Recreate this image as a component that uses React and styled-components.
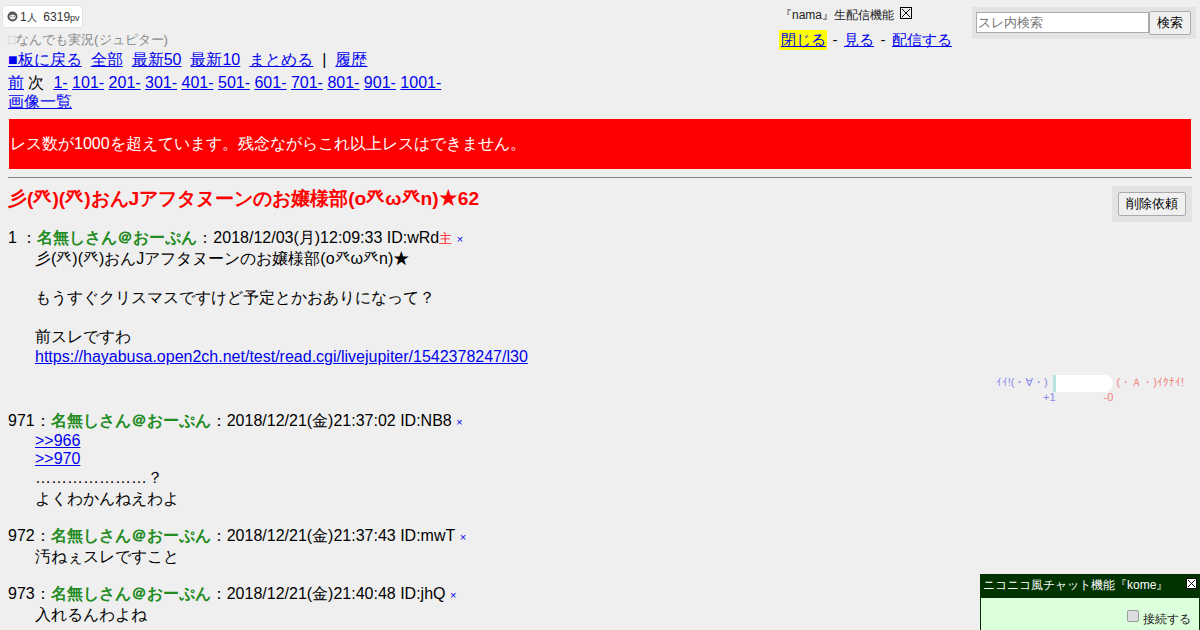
import styled, { createGlobalStyle } from "styled-components";

const FONT = `"Liberation Sans", sans-serif`;

const GlobalStyle = createGlobalStyle`
  html, body {
    margin: 0;
    height: 630px;
    overflow: hidden;
    background: #efefef;
    color: #000;
    font-family: ${FONT};
    font-size: 16px;
  }
  a { color: #0000ee; }
`;

const Page = styled.div`
  position: relative;
  height: 630px;
  padding: 5px 8px 0;
  box-sizing: border-box;
  overflow: hidden;
`;

const Header = styled.header`
  display: flex;
  justify-content: space-between;
  align-items: flex-start;
  height: 110px;
`;

const Left = styled.div`
  display: flex;
  flex-direction: column;
  align-items: flex-start;
  margin-left: -6px;
`;

const Counter = styled.div`
  display: flex;
  align-items: baseline;
  height: 23px;
  box-sizing: border-box;
  padding: 4px 2px 0 4px;
  background: #fff;
  border: 1px solid #e2e2e2;
  border-radius: 4px;
  font-size: 12px;
  color: #333;
  svg { align-self: center; margin: -4px 2px 0 0; }
`;

const Unit = styled.small`
  font-size: ${(p) => p.$size}px;
`;

const BoardName = styled.div`
  margin: 2px 0 0 6px;
  height: 19px;
  line-height: 19px;
  font-size: 13.33px;
  color: #888;
`;

const PaleSquare = styled.span`
  color: #ccc;
`;

const NavLine = styled.div`
  margin: ${(p) => p.$top || 0}px 0 0 6px;
  white-space: nowrap;
  a { margin-right: ${(p) => p.$gap || 9}px; }
`;

const Plain = styled.span`
  margin-right: ${(p) => p.$gap || 9}px;
`;

const Right = styled.div`
  display: flex;
  align-items: flex-start;
  gap: 20px;
  margin: 2px -4px 0 0;
`;

const Nama = styled.div`
  width: 172px;
  margin-top: -1px;
`;

const NamaTitle = styled.div`
  display: flex;
  align-items: center;
  height: 18px;
  font-size: 12px;
  color: #222;
`;

const CloseBox = styled.span`
  display: inline-flex;
  margin-left: 6px;
  margin-top: -5px;
`;

const NamaLinks = styled.div`
  display: flex;
  margin-top: 6px;
  font-size: 15px;
  line-height: 20px;
  white-space: nowrap;
`;

const Dash = styled.span`
  margin: 0 6.5px;
  &:first-of-type { margin-left: 5.5px; }
`;

const Marked = styled.a`
  background: #ffff00;
  margin-left: -1px;
  padding: 0 1px 0 2px;
`;

const SearchBox = styled.form`
  display: flex;
  align-items: center;
  width: 224px;
  height: 32px;
  box-sizing: border-box;
  padding: 0 4px;
  background: #e3e3e3;
`;

const SearchInput = styled.input`
  width: 173px;
  height: 21px;
  margin-top: -1px;
  box-sizing: border-box;
  padding: 1px;
  border: 1px solid #aaa;
  background: #fff;
  font: 13.3px ${FONT};
  &::placeholder { color: #777; }
`;

const FormButton = styled.button`
  height: 24px;
  padding: 0 7px;
  border: 1px solid #aaa;
  border-radius: 2px;
  background: #f0f0f0;
  color: #000;
  font: 13.3px ${FONT};
`;

const Banner = styled.div`
  margin: 4px 1px 0;
  height: 50px;
  padding-left: 1px;
  background: #ff0000;
  color: #fff;
  line-height: 50px;
`;

const Rule = styled.hr`
  margin: 8px 0 0;
  border: 0;
  border-top: 1px solid #808080;
`;

const TitleRow = styled.div`
  display: flex;
  justify-content: space-between;
  align-items: flex-start;
  height: 50px;
`;

const Title = styled.h1`
  margin: 10px 0 0;
  font-size: 19.2px;
  line-height: 22px;
  color: #ff0000;
`;

const Star = styled.span`
  font-family: "Noto Sans CJK JP", sans-serif;
  line-height: 1;
`;

const DeleteBox = styled.div`
  margin: 8px 0 0;
  padding: 6px;
  height: 36px;
  box-sizing: border-box;
  background: #e3e3e3;
`;

const Post = styled.article`
  margin-bottom: ${(p) => p.$after || 0}px;
`;

const PostHead = styled.div`
  white-space: nowrap;
`;

const Name = styled.b`
  color: #228b22;
`;

const Owner = styled.span`
  color: #ff2222;
  font-size: 13px;
`;

const Cross = styled.a`
  margin-left: 4.5px;
  font-size: 11px;
  text-decoration: none;
  color: #0000ee;
`;

const PostBody = styled.div`
  margin-left: 27px;
  white-space: nowrap;
`;

const Votes = styled.div`
  display: flex;
  justify-content: flex-end;
  height: 36px;
  margin: 9px 8px 0 0;
  font-size: 11px;
`;

const VoteSide = styled.div`
  display: flex;
  flex-direction: column;
  align-items: ${(p) => (p.$minus ? "flex-start" : "flex-end")};
  color: ${(p) => (p.$minus ? "#f08080" : "#8888ee")};
  line-height: 15px;
`;

const ForAll = styled.span`
  font-family: "DejaVu Sans", sans-serif;
`;

const VoteBar = styled.div`
  width: 57px;
  height: 17px;
  margin: 0 4px 0 5px;
  background: #fff;
  border-left: 3px solid #b6e2e2;
  border-radius: 0 9px 9px 0;
`;

const VoteCount = styled.span`
  margin-${(p) => (p.$minus ? "left" : "right")}: -${(p) => (p.$minus ? 13 : 8)}px;
`;

const Kome = styled.aside`
  position: absolute;
  right: 0;
  bottom: 0;
  width: 220px;
  height: 56px;
  box-sizing: border-box;
  border: 1px solid #003300;
  border-bottom: 0;
  background: #dcffdc;
`;

const KomeBar = styled.div`
  display: flex;
  justify-content: space-between;
  height: 23px;
  padding: 0 2px;
  background: #003300;
  color: #fff;
  font-size: 12px;
  line-height: 21px;
  svg { margin-top: 3px; }
`;

const KomeConnect = styled.label`
  display: flex;
  justify-content: flex-end;
  align-items: center;
  margin: 13px 8px 0 0;
  font-size: 12px;
  color: #222;
`;

const KomeCheck = styled.span`
  width: 10px;
  height: 10px;
  margin: -7px 4px 0 0;
  border: 1px solid #999;
  border-radius: 2px;
  background: #ddd;
`;

const BoxX = ({ size = 12, bg = "none" }) => (
  <svg width={size} height={size} viewBox="0 0 12 12">
    <rect x="0.5" y="0.5" width="11" height="11" fill={bg} stroke="#000" />
    <path d="M2 2 L10 10 M10 2 L2 10" stroke="#000" fill="none" />
  </svg>
);

const Face = () => (
  <svg width="11" height="11" viewBox="0 0 11 11">
    <circle cx="5.5" cy="5.5" r="5" fill="#555" />
    <path d="M2.2 5 Q5.5 2 8.8 5 L8.2 7.6 Q5.5 9.4 2.8 7.6 Z" fill="#eee" />
    <circle cx="4" cy="5.6" r="0.7" fill="#555" />
    <circle cx="7" cy="5.6" r="0.7" fill="#555" />
  </svg>
);

const ranges = ["1-", "101-", "201-", "301-", "401-", "501-", "601-", "701-", "801-", "901-", "1001-"];

const posts = [
  { no: 971, date: "2018/12/21(金)21:37:02 ID:NB8", lines: [[">>966", true], [">>970", true], ["…………………？"], ["よくわかんねえわよ"]] },
  { no: 972, date: "2018/12/21(金)21:37:43 ID:mwT", lines: [["汚ねぇスレですこと"]] },
  { no: 973, date: "2018/12/21(金)21:40:48 ID:jhQ", lines: [["入れるんわよね"]] },
];

export default function App() {
  return (
    <Page>
      <GlobalStyle />
      <Header>
        <Left>
          <Counter>
            <Face />1<Unit $size={10}>人</Unit>&nbsp; 6319<Unit $size={9}>pv</Unit>
          </Counter>
          <BoardName><PaleSquare>□</PaleSquare>なんでも実況(ジュピター)</BoardName>
          <NavLine $top={1}>
            <a href="#b">■板に戻る</a>
            <a href="#a">全部</a>
            <a href="#l50">最新50</a>
            <a href="#l10">最新10</a>
            <a href="#m">まとめる</a>
            <Plain>|</Plain>
            <a href="#h">履歴</a>
          </NavLine>
          <NavLine $top={2} $gap={4.45}>
            <a href="#p">前</a>
            <Plain $gap={9}>次</Plain>
            {ranges.map((r) => (
              <a href={`#${r}`} key={r}>{r}</a>
            ))}
          </NavLine>
          <NavLine $top={-2}>
            <a href="#i">画像一覧</a>
          </NavLine>
        </Left>
        <Right>
          <Nama>
            <NamaTitle>
              『nama』生配信機能
              <CloseBox><BoxX /></CloseBox>
            </NamaTitle>
            <NamaLinks>
              <Marked href="#c">閉じる</Marked>
              <Dash>-</Dash>
              <a href="#v">見る</a>
              <Dash>-</Dash>
              <a href="#s">配信する</a>
            </NamaLinks>
          </Nama>
          <SearchBox>
            <SearchInput placeholder="スレ内検索" />
            <FormButton type="button">検索</FormButton>
          </SearchBox>
        </Right>
      </Header>
      <Banner>レス数が1000を超えています。残念ながらこれ以上レスはできません。</Banner>
      <Rule />
      <TitleRow>
        <Title>彡(癶)(癶)おんJアフタヌーンのお嬢様部(o癶ω癶n)<Star>★</Star>62</Title>
        <DeleteBox>
          <FormButton type="button">削除依頼</FormButton>
        </DeleteBox>
      </TitleRow>
      <Post>
        <PostHead>
          1 ：<Name>名無しさん＠おーぷん</Name>：2018/12/03(月)12:09:33 ID:wRd<Owner>主</Owner>
          <Cross href="#x">×</Cross>
        </PostHead>
        <PostBody>
          彡(癶)(癶)おんJアフタヌーンのお嬢様部(o癶ω癶n)<Star>★</Star>
          <br /><br />
          もうすぐクリスマスですけど予定とかおありになって？
          <br /><br />
          前スレですわ
          <br />
          <a href="#t">https://hayabusa.open2ch.net/test/read.cgi/livejupiter/1542378247/l30</a>
        </PostBody>
      </Post>
      <Votes>
        <VoteSide>
          <span>ｲｲ!(・<ForAll>∀</ForAll>・)</span>
          <VoteCount>+1</VoteCount>
        </VoteSide>
        <VoteBar />
        <VoteSide $minus>
          (・Ａ・)ｲｸﾅｲ!
          <VoteCount $minus>-0</VoteCount>
        </VoteSide>
      </Votes>
      {posts.map((post) => (
        <Post key={post.no} $after={16}>
          <PostHead>
            {post.no}：<Name>名無しさん＠おーぷん</Name>：{post.date}
            <Cross href="#x">×</Cross>
          </PostHead>
          <PostBody>
            {post.lines.map(([text, isLink]) => (
              <div key={text}>{isLink ? <a href="#r">{text}</a> : text}</div>
            ))}
          </PostBody>
        </Post>
      ))}
      <Kome>
        <KomeBar>
          ニコニコ風チャット機能『kome』
          <BoxX size={11} bg="#fff" />
        </KomeBar>
        <KomeConnect>
          <KomeCheck />接続する
        </KomeConnect>
      </Kome>
    </Page>
  );
}
